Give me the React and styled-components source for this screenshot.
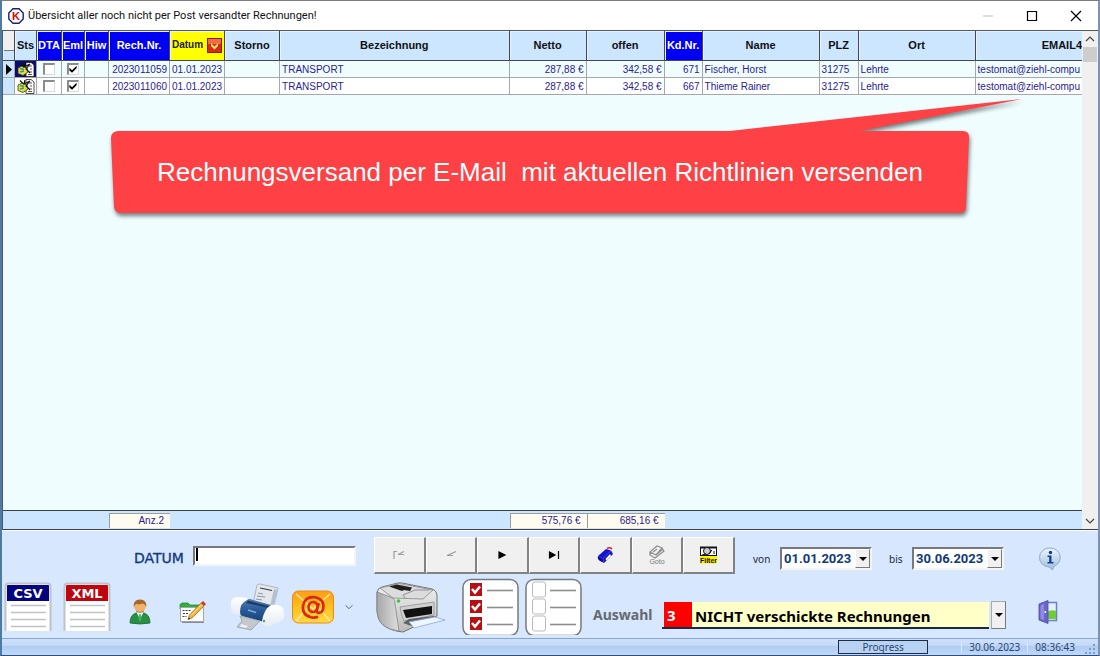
import React, { useState } from 'react';
import styled, { createGlobalStyle, css } from 'styled-components';

const GlobalStyle = createGlobalStyle`
  * {
    box-sizing: border-box;
  }

  body {
    margin: 0;
    background: #3f6a93;
    font-family: 'Noto Sans', 'Open Sans', sans-serif;
    font-size: 12px;
  }

  button, input, select {
    font: inherit;
    color: inherit;
    border-radius: 0;
  }
`;

const columns = [
  { id: 'mark', width: 12 },
  { id: 'sts', title: 'Sts', width: 22 },
  { id: 'dta', title: 'DTA', width: 25, tone: 'blue' },
  { id: 'eml', title: 'Eml', width: 23, tone: 'blue' },
  { id: 'hiw', title: 'Hiw', width: 24, tone: 'blue' },
  { id: 'nr', title: 'Rech.Nr.', width: 61, tone: 'blue' },
  { id: 'datum', title: 'Datum', width: 55, tone: 'yellow' },
  { id: 'storno', title: 'Storno', width: 55 },
  { id: 'text', title: 'Bezeichnung' },
  { id: 'netto', title: 'Netto', width: 77 },
  { id: 'offen', title: 'offen', width: 78 },
  { id: 'kdnr', title: 'Kd.Nr.', width: 38, tone: 'blue' },
  { id: 'name', title: 'Name', width: 117 },
  { id: 'plz', title: 'PLZ', width: 39 },
  { id: 'ort', title: 'Ort', width: 117 },
  { id: 'email', title: 'EMAIL4', width: 106 },
];

const invoices = [
  { nr: '2023011059', datum: '01.01.2023', text: 'TRANSPORT', netto: '287,88 €', offen: '342,58 €', kdnr: '671', name: 'Fischer, Horst', plz: '31275', ort: 'Lehrte', email: 'testomat@ziehl-compu' },
  { nr: '2023011060', datum: '01.01.2023', text: 'TRANSPORT', netto: '287,88 €', offen: '342,58 €', kdnr: '667', name: 'Thieme Rainer', plz: '31275', ort: 'Lehrte', email: 'testomat@ziehl-compu' },
];

const totals = { nr: 'Anz.2', netto: '575,76 €', offen: '685,16 €' };

const Window = styled.div`
  min-height: 100vh;
  display: flex;
  flex-direction: column;
  border: 1px solid #7b7d84;
  border-width: 1px 2px 1px 2px;
  border-left-color: #4d7ba4;
  border-right-color: #7d93b4;
  border-bottom-color: #2f4c78;
  background: #d6e7fe;
`;

const TitleBar = styled.header`
  height: 29px;
  display: flex;
  align-items: center;
  padding-left: 6px;
  background: #fff;
`;

const Title = styled.h1`
  flex: 1;
  margin: 0;
  padding-left: 4px;
  font-family: Roboto, sans-serif;
  font-size: 11px;
  font-weight: 400;
  color: #111;
`;

const WindowButton = styled.button`
  width: 44px;
  height: 28px;
  display: flex;
  align-items: center;
  justify-content: center;
  padding: 0;
  border: 0;
  background: none;
`;

const GridArea = styled.main`
  flex: 1;
  display: flex;
  position: relative;
  border-left: 1px solid #55585e;
  border-top: 1px solid #55585e;
  border-bottom: 1px solid #3c4046;
  background: #f0fdff;
`;

const Table = styled.table`
  flex: 1;
  min-width: 0;
  table-layout: fixed;
  border-collapse: separate;
  border-spacing: 0;
  font-family: 'Liberation Sans', Arial, sans-serif;
  font-size: 10px;
  line-height: 12px;
  color: #2a2390;

  th:last-child, td:last-child {
    border-right: 0;
  }
`;

const tones = {
  plain: css`
    background: #cce6ff;
    color: #111;
  `,
  blue: css`
    background: #0000f4;
    color: #fff;
  `,
  yellow: css`
    background: #ffff00;
    color: #222;
  `,
  mark: css`
    background: linear-gradient(#f0f0f0 19px, #777 19px, #777 20px, #cce6ff 20px);
  `,
};

const HeadCell = styled.th`
  height: 30px;
  padding: 0 0 1px;
  border-right: 1px solid #45484c;
  border-bottom: 1px solid #45484c;
  box-shadow: inset 1px 1px 0 #e6f3ff;
  font-size: 11px;
  font-weight: 700;
  text-align: ${({ $align }) => $align || 'center'};
  white-space: nowrap;
  overflow: hidden;
  ${({ $tone }) => tones[$tone]}
`;

const SortHead = styled.div`
  display: flex;
  align-items: center;
  justify-content: space-between;
  padding: 0 2px 0 2px;
  font-size: 10px;
`;

const Cell = styled.td`
  height: 17px;
  padding: 2px 2px 0;
  border-right: 1px solid #a5a7ab;
  border-bottom: 1px solid #a5a7ab;
  background: ${({ $odd }) => ($odd ? '#fff' : '#f0fdff')};
  text-align: ${({ $align }) => $align || 'left'};
  white-space: nowrap;
  overflow: hidden;
`;

const MarkCell = styled(Cell)`
  padding: 0;
  background: #cce6ff;

  svg {
    display: block;
    margin: 0 auto;
  }
`;

const StatusCell = styled(Cell)`
  padding: 0;
  background: ${({ $active }) => ($active ? '#0a0a78' : '#fff')};

  svg {
    display: block;
    margin: 0 auto;
  }
`;

const Filler = styled.td`
  padding: 0;
`;

const FootCell = styled.td`
  height: 19px;
  padding: 2px 0 1px;
  border-top: 1px solid #3c4046;
  background: #cce6ff;
`;

const Total = styled.output`
  height: 15px;
  display: block;
  padding: 1px 6px 0 0;
  border-left: 1px solid #9a9da0;
  border-top: 1px solid #9a9da0;
  background: #fffbef;
  text-align: right;
`;

const TickCell = styled(Cell)`
  padding: 0;
`;

const TickBox = styled.input`
  appearance: none;
  width: 12px;
  height: 12px;
  display: block;
  margin: 0 auto;
  border: 1px solid #8c8c8c;
  border-width: 2px 1px 1px 2px;
  border-right-color: #d9d9d9;
  border-bottom-color: #d9d9d9;
  background: #fff;

  &:checked::before {
    content: '';
    display: block;
    width: 8px;
    height: 8px;
    background: #000;
    clip-path: polygon(5% 35%, 38% 65%, 95% 8%, 95% 42%, 38% 98%, 5% 68%);
  }
`;

const ScrollBar = styled.div`
  width: 16px;
  display: flex;
  flex-direction: column;
  background: #f0f0f0;
`;

const ScrollButton = styled.button`
  height: 16px;
  display: flex;
  align-items: center;
  justify-content: center;
  padding: 0;
  border: 0;
  background: none;
`;

const ScrollTrack = styled.div`
  flex: 1;
`;

const ScrollThumb = styled.div`
  height: 15px;
  margin: 0 1px;
  background: #cdcdcd;
`;

const Callout = styled.aside`
  position: absolute;
  left: 107px;
  top: 64px;
  width: 920px;
  height: 130px;

  svg {
    display: block;
    filter: drop-shadow(1px 3px 2px rgba(40, 60, 60, 0.65));
  }
`;

const CalloutText = styled.p`
  position: absolute;
  left: 0;
  top: 37px;
  width: 860px;
  margin: 0;
  font-family: 'Liberation Sans', Arial, sans-serif;
  font-size: 26px;
  line-height: 80px;
  color: #fff;
  text-align: center;
  white-space: pre;
`;

const Panel = styled.section`
  display: flex;
  flex-direction: column;
  gap: 4px;
  padding: 6px 36px 3px 1px;
  border-top: 1px solid #fff;
  background: #d6e7fe;
`;

const PanelRow = styled.div`
  display: flex;
  align-items: center;
`;

const Field = styled.div`
  display: flex;
  align-items: center;
  gap: 9px;
  margin-left: ${({ $indent }) => $indent}px;
  padding-top: ${({ $drop }) => $drop || 0}px;
`;

const SearchLabel = styled.label`
  width: 50px;
  padding-top: 4px;
  font-family: 'DejaVu Sans', Verdana, sans-serif;
  font-size: 14px;
  color: #10387c;
  -webkit-text-stroke: 0.3px #10387c;
`;

const SearchInput = styled.input`
  width: 163px;
  height: 20px;
  padding: 0 5px;
  border: 2px solid #f2f6fb;
  border-top-color: #77797d;
  border-left-color: #77797d;
  background: linear-gradient(#000, #000) 1px 0 / 2px 13px no-repeat #fff;
  outline: none;
`;

const Navigator = styled.div`
  width: 361px;
  display: grid;
  grid-template-columns: repeat(7, 1fr);
  margin-left: 18px;
`;

const NavButton = styled.button`
  height: 37px;
  display: flex;
  align-items: center;
  justify-content: center;
  padding: 0;
  border: 1px solid #fff;
  border-right: 2px solid #808285;
  border-bottom: 2px solid #808285;
  background: #f0f0f0;
`;

const SmallLabel = styled.label`
  width: ${({ $width }) => $width}px;
  font-size: 10px;
  color: #222a3c;
`;

const DateBox = styled.div`
  width: 92px;
  height: 23px;
  display: flex;
  position: relative;
  border: 2px solid #f4f4f4;
  border-top-color: #77797d;
  border-left-color: #77797d;
  background: #fff;
`;

const DateSelect = styled.select`
  appearance: none;
  width: 100%;
  padding: 0 0 0 2px;
  border: 0;
  background: none;
  outline: none;
  font-family: Roboto, sans-serif;
  font-size: 13px;
  font-weight: 700;
  color: #123a74;
`;

const DropMark = styled.span`
  width: 15px;
  position: absolute;
  top: 0;
  right: 0;
  bottom: 0;
  display: flex;
  align-items: center;
  justify-content: center;
  border: 1px solid #fff;
  border-right-color: #77797d;
  border-bottom-color: #77797d;
  background: #f0f0f0;
  pointer-events: none;

  &::after {
    content: '';
    border: 4px solid transparent;
    border-top-color: #000;
    border-bottom: 0;
  }
`;

const IconButton = styled.button`
  width: ${({ $width }) => $width}px;
  min-height: 36px;
  display: flex;
  align-items: center;
  justify-content: center;
  margin-left: ${({ $push }) => $push || '0'};
  padding: ${({ $drop }) => $drop || 0}px 0 0;
  border: 0;
  background: none;

  svg {
    flex: none;
  }
`;

const ChoiceLabel = styled.label`
  width: 69px;
  margin-left: 11px;
  padding-top: 16px;
  font-size: 14px;
  font-weight: 700;
  color: #66696e;
`;

const Choice = styled.div`
  width: 344px;
  height: 28px;
  display: flex;
  position: relative;
  margin-top: 16px;
  font-size: 15px;
  font-weight: 700;
  line-height: 26px;

  ${DropMark} {
    border-left-color: #a7a9ac;
    border-top-color: #a7a9ac;
  }
`;

const ChoiceLine = styled.div`
  flex: 1;
  display: flex;
  margin: 1px 17px 0 0;
  padding-left: 2px;
  border-bottom: 2px solid #1c2a44;
`;

const ChoiceNumber = styled.output`
  width: 28px;
  padding-left: 3px;
  background: #ff0000;
  color: #fff;
`;

const ChoiceSelect = styled.select`
  appearance: none;
  flex: 1;
  min-width: 0;
  padding: 1px 0 0 3px;
  border: 0;
  background: #ffffc8;
  color: #000;
  outline: none;
`;

const StatusBar = styled.footer`
  height: 17px;
  display: flex;
  align-items: center;
  border-top: 1px solid #86a5cf;
  background: linear-gradient(#cfe2fb, #c3d9f7 40%, #b0ccf2 45%, #c0d8f8);
  font-size: 10px;
  line-height: 12px;
  color: #26466f;
`;

const Progress = styled.div`
  width: 90px;
  height: 14px;
  margin-left: auto;
  border: 1px solid #222c40;
  background: #b8d2f4;
  text-align: center;
`;

const StatusText = styled.span`
  margin-left: ${({ $indent }) => $indent}px;
  padding-left: 7px;
  border-left: 1px solid #dce9fc;
`;

const Grip = styled.svg`
  margin: 4px 2px 0 9px;
`;

const AppIcon = () => (
  <svg width="16" height="16" viewBox="0 0 16 16">
    <path d="M5 .8h6L15.2 5v6L11 15.2H5L.8 11V5z" fill="#fff" stroke="#19246e" strokeWidth="1.4" />
    <text x="8" y="12" textAnchor="middle" fontFamily="Liberation Sans" fontWeight="700" fontSize="11" fill="#e00000">K</text>
  </svg>
);

const SortIcon = () => (
  <svg width="15" height="15" viewBox="0 0 15 15">
    <rect x=".5" y=".5" width="14" height="14" fill="#d8281a" stroke="#8d1710" />
    <path d="M1 1h13v5H1z" fill="#ee6a48" />
    <path d="M4 5l3.500 3.500L11 5v3l-3.500 3.500L4 8z" fill="#ffe95a" />
  </svg>
);

const StatusIcon = () => (
  <svg width="18" height="15" viewBox="0 0 18 15">
    <path d="M9 .5h5l3 2.500v11.500H9z" fill="#fff" stroke="#222" strokeWidth=".8" />
    <path d="M12 4h3M13 7h2M12 10h3M11 12.500h4" stroke="#555" />
    <path d="M1 6l4-2 5 2 1 4-5 3.500-5-2z" fill="#e7df34" stroke="#373910" strokeWidth=".8" />
    <path d="M3 1.500l3 3M8 1l-1 4 6-3-4 5 4 4" stroke="#111" fill="none" strokeWidth="1.200" />
    <path d="M3 6.500l4 1M3 10l4-1" stroke="#2f9a8a" strokeWidth="1.500" />
  </svg>
);

const FileIcon = ({ label, color }) => (
  <svg width="48" height="49" viewBox="0 0 48 49">
    <path d="M1.500 49V4.500q0-3 3-3h39q3 0 3 3V49" fill="#fff" stroke="#bfc2c6" strokeWidth="2" />
    <path d="M3 4q0-1 1-1h40q1 0 1 1v15H3z" fill={color} />
    <text x="24" y="15.500" textAnchor="middle" fontFamily="DejaVu Sans" fontWeight="700" fontSize="13" fill="#fff">{label}</text>
    <path d="M7 23.500h35M7 30.500h35M7 37.500h35M7 44.500h35" stroke="#bfc1c4" strokeWidth="1.500" />
  </svg>
);

const PersonIcon = () => (
  <svg width="22" height="27" viewBox="0 0 22 27">
    <path d="M1 25q0-8 6-10h8q6 2 6 10-10 2-20 0z" fill="#279044" stroke="#14672c" strokeWidth=".8" />
    <path d="M7.500 14.500L11 21l3.500-6.500z" fill="#e8fff0" />
    <path d="M10.300 16h1.400l.8 5-1.500 3-1.500-3z" fill="#46b35f" />
    <circle cx="11" cy="8" r="6" fill="#f0b26a" />
    <path d="M4.800 9Q4 1.500 11 1.500T17.200 9q-1-3-3-3.500-4 1.500-6.800.3Q5.500 7 4.800 9z" fill="#a8672a" />
    <path d="M7 13q4 3 8 0" stroke="#c07d3c" fill="none" />
  </svg>
);

const NoteIcon = () => (
  <svg width="28" height="24" viewBox="0 0 28 24">
    <path d="M1 9V4.500L3 3h6l2 2h11v5z" fill="#2fb03c" stroke="#16842a" strokeWidth=".7" />
    <path d="M1.500 7.500h23v14h-23z" fill="#fdfdfd" stroke="#a3a6aa" />
    <path d="M3 22.500h22" stroke="#888c90" />
    <path d="M3.500 10.500h9M4 13.500h6M3.500 16.500h4" stroke="#3b3d44" strokeDasharray="2 1" />
    <path d="M22 3l3 3-12 12-4 1.500 1.400-4.500z" fill="#f3b53a" stroke="#96601a" strokeWidth=".7" />
    <path d="M22 3l2-2 3 3-2 2z" fill="#c23b35" />
    <path d="M9 19.500l.8-2 1.400 1.300z" fill="#222" />
    <path d="M12 15.500L23 4.500" stroke="#ffe08d" />
  </svg>
);

const InkjetIcon = () => (
  <svg width="54" height="48" viewBox="0 0 54 48">
    <defs>
      <linearGradient id="inkBody" x1="0" y1="0" x2="0" y2="1">
        <stop offset="0" stopColor="#5480b8" />
        <stop offset=".45" stopColor="#2a5c9b" />
        <stop offset="1" stopColor="#184175" />
      </linearGradient>
      <linearGradient id="inkWhite" x1="0" y1="0" x2="0" y2="1">
        <stop offset="0" stopColor="#fff" />
        <stop offset="1" stopColor="#e6ebf1" />
      </linearGradient>
    </defs>
    <path d="M27 2q1-1 3-1l18 4-5 21-20-5z" fill="#e4e8ec" stroke="#a3a9ae" strokeWidth=".8" />
    <path d="M44 6l4 1-4 17-4-1z" fill="#b4c2cf" />
    <path d="M30 5l12 2.500" stroke="#333a40" strokeWidth="1.200" />
    <path d="M28 10l5 1M27 13l8 1M26 16l6 1" stroke="#8a949c" strokeWidth="1" />
    <path d="M1 19q1-5 7-5l10 1-5 17-8-1q-5-2-4-12z" fill="url(#inkWhite)" />
    <path d="M17 17q1-1 3-1l21 6q3 2 2 7l-5 9q-1 1-3 1L12 33q-2-1-2-4 0-9 7-12z" fill="url(#inkBody)" />
    <path d="M18 17.500l22 6-2 1.500-22-5z" fill="#1f3d60" />
    <path d="M41 22q8-1 12 3 2 6 0 12l-16 7q-5-1-5-6 2-12 9-16z" fill="url(#inkWhite)" />
    <path d="M10 33l20 5-9 9-14-3 5-6z" fill="#c3c8cc" stroke="#9aa0a6" strokeWidth=".8" />
    <path d="M11 41l7 2-2 2-6-1.500z" fill="#eef0f2" />
    <path d="M18 27l8 2.500" stroke="#7fa9da" strokeWidth="1.500" />
    <circle cx="34" cy="38" r="1.200" fill="#43a85a" />
  </svg>
);

const MailIcon = () => (
  <svg width="42" height="34" viewBox="0 0 42 34">
    <defs>
      <linearGradient id="mailBody" x1="0" y1="0" x2="0" y2="1">
        <stop offset="0" stopColor="#ff9d14" />
        <stop offset=".5" stopColor="#ffc020" />
        <stop offset="1" stopColor="#ffd944" />
      </linearGradient>
    </defs>
    <rect x=".5" y="1" width="41" height="32" rx="6" fill="url(#mailBody)" stroke="#ef8a14" />
    <path d="M4 4l17 15L38 4M4 31l12-14M38 31L26 17" fill="none" stroke="#ffeaa4" strokeWidth="1.300" />
    <g fill="none" stroke="#d92814" strokeWidth="2.600" transform="rotate(12 21 17)">
      <ellipse cx="21" cy="17" rx="4.500" ry="5" />
      <path d="M26 12l-.7 7q.3 3 3 2.500 3-1.500 3-5Q31 7 21 7 11 8 11 17.500 11.500 27 21 27.500q4 0 7-2" />
    </g>
  </svg>
);

const LaserIcon = () => (
  <svg width="72" height="52" viewBox="0 0 72 52">
    <defs>
      <linearGradient id="laserSide" x1="0" y1="0" x2="1" y2="0">
        <stop offset="0" stopColor="#a7a7a7" />
        <stop offset="1" stopColor="#dedede" />
      </linearGradient>
      <linearGradient id="laserFront" x1="0" y1="0" x2="0" y2="1">
        <stop offset="0" stopColor="#f2f2f2" />
        <stop offset="1" stopColor="#bcbcbc" />
      </linearGradient>
    </defs>
    <path d="M2 11q1-4 5-5l16-4h4l30 6q5 2 5 7v20L28 51q-12-1-20-7-5-4-6-14z" fill="url(#laserFront)" stroke="#707070" />
    <path d="M2 11l16 6q2 2 2 6l4 27q-10-1-16-6-5-4-6-14z" fill="url(#laserSide)" stroke="#858585" strokeWidth=".8" />
    <path d="M5 7l19-4.500L58 9 48 18l-30-1z" fill="#dcdcdc" stroke="#8a8a8a" strokeWidth=".8" />
    <path d="M14 5.500l8-2 15 3-2 3.500-6-1-2 1z" fill="#1e1e1e" />
    <path d="M30 17l-2-3 12-5h14" fill="none" stroke="#909090" />
    <path d="M25 26l34-5v13L29 40q-3-6-4-14z" fill="#d0d0d0" stroke="#909090" strokeWidth=".8" />
    <path d="M28 29l29-4v8l-26 4z" fill="#111" />
    <path d="M28 42l6-4 25-3 2 3-22 8z" fill="#5f6164" />
    <path d="M34 41l26-5 10 3-31 8z" fill="#eef5ff" stroke="#88a9de" strokeWidth=".8" />
    <circle cx="23.500" cy="20" r="1.800" fill="#2fd23c" />
  </svg>
);

const ChecklistIcon = ({ checked }) => (
  <svg width="57" height="57" viewBox="0 0 57 57">
    <rect x="1" y="1.500" width="55" height="56" rx="8" fill="#fff" stroke="#76797d" strokeWidth="1.500" />
    {[5, 22, 39].map((y) => (
      <g key={y}>
        {checked ? (
          <>
            <rect x="8" y={y} width="12" height="13" fill="#b80f12" />
            <path d={`M10 ${y + 6}l3 3.500 5-6`} fill="none" stroke="#fff" strokeWidth="2.500" />
          </>
        ) : (
          <rect x="7.500" y={y - 1} width="13" height="15" rx="2" fill="#fff" stroke="#b9bbbf" />
        )}
        <path d={`M25 ${y + 7.5}h26`} stroke="#8c8e92" strokeWidth="1.600" />
      </g>
    ))}
  </svg>
);

const BookIcon = () => (
  <svg width="18" height="18" viewBox="0 0 18 18">
    <path d="M1 10l8-7 5 1.500-8 8z" fill="#1414cc" />
    <path d="M1 10l5 2.500 1 4.500-4-2q-3-2-2-5z" fill="#0a0aa4" />
    <path d="M6 12.500l8-8 2 3.500-9 9z" fill="#1414cc" />
    <path d="M8.500 13l4.500-5 1 2-4.500 4.500z" fill="#fff" />
    <path d="M10 2.500q3-1.500 5 .5" stroke="#e02020" strokeWidth="1.500" fill="none" />
  </svg>
);

const GotoIcon = () => (
  <svg width="20" height="22" viewBox="0 0 20 22">
    <path d="M3 8l7-6 5 2-6 7zM3 8v3l5 3 9-7-2-3M9 11l7-6M6 8l4-3" fill="#f6f6f6" stroke="#8b8d90" strokeWidth="1.200" />
    <text x="10" y="20" textAnchor="middle" fontFamily="Liberation Sans" fontSize="7" fill="#77797c">Goto</text>
  </svg>
);

const FilterIcon = () => (
  <svg width="20" height="18" viewBox="0 0 20 18">
    <rect x="1.500" y="1.500" width="16" height="8" fill="#fff" stroke="#111" />
    <path d="M1 1.500h17" stroke="#111" strokeWidth="2" />
    <circle cx="8" cy="5" r="3.500" fill="#c9ccd0" stroke="#111" />
    <path d="M10 8l3-4M3 9l4-1M15 5v3" stroke="#111" />
    <rect x="1" y="10" width="17" height="7.500" fill="#fff200" />
    <text x="9.500" y="16.500" textAnchor="middle" fontFamily="Liberation Sans" fontWeight="700" fontSize="7" fill="#111">Filter</text>
  </svg>
);

const InfoIcon = () => (
  <svg width="22" height="24" viewBox="0 0 22 24">
    <defs>
      <linearGradient id="infoBubble" x1="0" y1="0" x2="0" y2="1">
        <stop offset="0" stopColor="#eef6fd" />
        <stop offset="1" stopColor="#9bbedf" />
      </linearGradient>
    </defs>
    <path d="M11 1a10 9.500 0 0 1 4 18.300L13.500 23 10 20A10 9.500 0 0 1 11 1z" fill="url(#infoBubble)" stroke="#8eaccb" />
    <circle cx="11.500" cy="5.500" r="1.700" fill="#153a92" />
    <path d="M8.500 8.500h4v6.500h2v1.500h-6V15h1.700v-5H8.500z" fill="#153a92" />
  </svg>
);

const DoorIcon = () => (
  <svg width="20" height="24" viewBox="0 0 20 24">
    <path d="M8 2.500h10.500v18H8z" fill="#e4f2ff" stroke="#6f7ccb" strokeWidth="1.500" />
    <path d="M9 12q4-3 9-1v8H9z" fill="#6fce35" />
    <path d="M1 4l9-3.500v23L1 20z" fill="#6c65ca" stroke="#4c479f" strokeWidth=".8" />
    <path d="M2.500 5.500L6 4v16l-3.500-1z" fill="#8f8be3" />
    <circle cx="7.300" cy="12" r="1" fill="#fff" />
  </svg>
);

const Drawing = ({ d, color = '#000', fill = 'none', size = 12 }) => (
  <svg width={size} height={size} viewBox="0 0 12 12">
    <path d={d} fill={fill} stroke={color} strokeWidth="1.200" />
  </svg>
);

const navButtons = [
  { name: 'Erster', icon: <Drawing d="M1 10V2.500h3M11 2.500L5 5.500H11" color="#9a9c9f" /> },
  { name: 'Zurück', icon: <Drawing d="M11 2.500L2 6.500h6" color="#9a9c9f" /> },
  { name: 'Weiter', icon: <Drawing d="M3 3L9 6 3 9z" fill="#000" /> },
  { name: 'Letzter', icon: <Drawing d="M1.500 3L7 6 1.500 9zM10.500 2v8" fill="#000" /> },
  { name: 'Buch', icon: <BookIcon /> },
  { name: 'Goto', icon: <GotoIcon /> },
  { name: 'Filter', icon: <FilterIcon /> },
];

const InvoiceRow = ({ invoice, index }) => {
  const active = index === 0;
  const odd = index % 2 === 1;
  return (
    <tr>
      <MarkCell>
        {active && (
          <svg width="6" height="11" viewBox="0 0 6 11"><path d="M0 0l6 5.500L0 11z" /></svg>
        )}
      </MarkCell>
      <StatusCell $active={active}><StatusIcon /></StatusCell>
      <TickCell $odd={odd}><TickBox type="checkbox" aria-label={`DTA ${invoice.nr}`} /></TickCell>
      <TickCell $odd={odd}><TickBox type="checkbox" aria-label={`Eml ${invoice.nr}`} defaultChecked /></TickCell>
      <Cell $odd={odd} />
      <Cell $odd={odd} $align="right">{invoice.nr}</Cell>
      <Cell $odd={odd}>{invoice.datum}</Cell>
      <Cell $odd={odd} />
      <Cell $odd={odd}>{invoice.text}</Cell>
      <Cell $odd={odd} $align="right">{invoice.netto}</Cell>
      <Cell $odd={odd} $align="right">{invoice.offen}</Cell>
      <Cell $odd={odd} $align="right">{invoice.kdnr}</Cell>
      <Cell $odd={odd}>{invoice.name}</Cell>
      <Cell $odd={odd}>{invoice.plz}</Cell>
      <Cell $odd={odd}>{invoice.ort}</Cell>
      <Cell $odd={odd}>{invoice.email}</Cell>
    </tr>
  );
};

const InvoiceTable = () => (
  <Table>
    <colgroup>
      {columns.map(({ id, width }) => <col key={id} width={width} />)}
    </colgroup>
    <thead>
      <tr>
        {columns.map(({ id, title, tone = 'plain' }) => (
          <HeadCell
            key={id}
            $tone={id === 'mark' ? 'mark' : tone}
            $align={id === 'email' ? 'right' : 'center'}
          >
            {id === 'datum' ? <SortHead>{title}<SortIcon /></SortHead> : title}
          </HeadCell>
        ))}
      </tr>
    </thead>
    <tbody>
      {invoices.map((invoice, index) => (
        <InvoiceRow key={invoice.nr} invoice={invoice} index={index} />
      ))}
      <tr>
        <Filler colSpan={columns.length} />
      </tr>
    </tbody>
    <tfoot>
      <tr>
        {columns.map(({ id }) => (
          <FootCell key={id}>{totals[id] && <Total>{totals[id]}</Total>}</FootCell>
        ))}
      </tr>
    </tfoot>
  </Table>
);

const DateField = ({ id, label, width, indent, value }) => (
  <Field $indent={indent} $drop={6}>
    <SmallLabel htmlFor={id} $width={width}>{label}</SmallLabel>
    <DateBox>
      <DateSelect id={id} defaultValue={value}>
        <option>{value}</option>
      </DateSelect>
      <DropMark />
    </DateBox>
  </Field>
);

export default function App() {
  const [search, setSearch] = useState('');

  return (
    <Window>
      <GlobalStyle />
      <TitleBar>
        <AppIcon />
        <Title>Übersicht aller noch nicht per Post versandter Rechnungen!</Title>
        <WindowButton aria-label="Minimieren"><Drawing d="M1 6h10" color="#c9c9c9" /></WindowButton>
        <WindowButton aria-label="Maximieren"><Drawing d="M1.500 1.500h9v9h-9z" /></WindowButton>
        <WindowButton aria-label="Schließen"><Drawing d="M1 1l10 10M11 1L1 11" /></WindowButton>
      </TitleBar>

      <GridArea>
        <InvoiceTable />
        <ScrollBar>
          <ScrollButton aria-label="Nach oben"><Drawing d="M2 8l4-4 4 4" color="#444" size={12} /></ScrollButton>
          <ScrollTrack><ScrollThumb /></ScrollTrack>
          <ScrollButton aria-label="Nach unten"><Drawing d="M2 4l4 4 4-4" color="#444" size={12} /></ScrollButton>
        </ScrollBar>
        <Callout>
          <svg width="920" height="130" viewBox="0 0 920 130">
            <path
              d="M9 36H620L912 4 750 36H853q6 0 6 6L856 112q0 6-6 6H11q-6 0-7-6L1 43q0-7 8-7z"
              fill="#fd4144"
            />
          </svg>
          <CalloutText>{'Rechnungsversand per E-Mail  mit aktuellen Richtlinien versenden'}</CalloutText>
        </Callout>
      </GridArea>

      <Panel>
        <PanelRow>
          <Field $indent={131}>
            <SearchLabel htmlFor="datum">DATUM</SearchLabel>
            <SearchInput id="datum" value={search} onChange={(e) => setSearch(e.target.value)} />
          </Field>
          <Navigator>
            {navButtons.map(({ name, icon }) => (
              <NavButton key={name} aria-label={name}>{icon}</NavButton>
            ))}
          </Navigator>
          <DateField id="von" label="von" width={18} indent={18} value="01.01.2023" />
          <DateField id="bis" label="bis" width={14} indent={17} value="30.06.2023" />
          <IconButton $width={24} $push="auto" $drop={6} aria-label="Info"><InfoIcon /></IconButton>
        </PanelRow>
        <PanelRow>
          <IconButton $width={50} aria-label="CSV"><FileIcon label="CSV" color="#04047e" /></IconButton>
          <IconButton $width={67} aria-label="XML"><FileIcon label="XML" color="#bf0410" /></IconButton>
          <IconButton $width={40} $drop={10} aria-label="Kunde"><PersonIcon /></IconButton>
          <IconButton $width={66} $drop={10} aria-label="Notiz"><NoteIcon /></IconButton>
          <IconButton $width={62} aria-label="Drucken"><InkjetIcon /></IconButton>
          <IconButton $width={50} aria-label="E-Mail"><MailIcon /></IconButton>
          <IconButton $width={22} aria-label="Mehr"><Drawing d="M2 4l4 4 4-4" color="#4a6488" size={10} /></IconButton>
          <IconButton $width={102} aria-label="Liste drucken"><LaserIcon /></IconButton>
          <IconButton $width={57} aria-label="Alle wählen"><ChecklistIcon checked /></IconButton>
          <IconButton $width={57} $push="6px" aria-label="Keine wählen"><ChecklistIcon /></IconButton>
          <ChoiceLabel htmlFor="auswahl">Auswahl</ChoiceLabel>
          <Choice>
            <ChoiceLine>
              <ChoiceNumber>3</ChoiceNumber>
              <ChoiceSelect id="auswahl">
                <option>NICHT verschickte Rechnungen</option>
              </ChoiceSelect>
            </ChoiceLine>
            <DropMark />
          </Choice>
          <IconButton $width={28} $push="auto" $drop={10} aria-label="Beenden"><DoorIcon /></IconButton>
        </PanelRow>
      </Panel>

      <StatusBar>
        <Progress>Progress</Progress>
        <StatusText $indent={33}>30.06.2023</StatusText>
        <StatusText $indent={7}>08:36:43</StatusText>
        <Grip width="12" height="12" viewBox="0 0 12 12">
          <path d="M9 1h2v2H9zM5 5h2v2H5zM9 5h2v2H9zM1 9h2v2H1zM5 9h2v2H5zM9 9h2v2H9z" fill="#7f9cc6" />
        </Grip>
      </StatusBar>
    </Window>
  );
}
